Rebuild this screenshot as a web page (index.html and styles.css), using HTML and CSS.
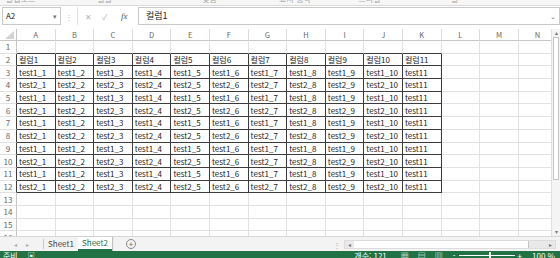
FILE: index.html
```html
<!DOCTYPE html>
<html lang="ko">
  <head>
    <meta charset="UTF-8" />
    <title>Excel - Sheet2</title>
    <link rel="stylesheet" href="styles.css">
  </head>
  <body>
    <div class="ribbon">
      <span class="grp g1">클립보드</span>
      <span class="grp g2">글꼴</span>
      <span class="grp g3">맞춤</span>
      <span class="grp g4">표시 형식</span>
      <span class="grp g5">스타일</span>
      <span class="grp g6">셀</span>
    </div>

    <div class="fbar">
      <div class="namebox">A2<span class="drop">▾</span></div>
      <span class="dots">⋮</span>
      <div class="fbtns">
        <span class="fb">✕</span>
        <span class="fb">✓</span>
        <span class="fx">fx</span>
      </div>
      <div class="formula">컬럼1<span class="drop">⌄</span></div>
    </div>

    <div class="work">
      <div class="sheet">
        <table class="grid">
          <tr class="hdr">
            <th class="corner"><span class="tri"></span></th>
            <th>A</th><th>B</th><th>C</th><th>D</th><th>E</th><th>F</th><th>G</th>
            <th>H</th><th>I</th><th>J</th><th>K</th><th>L</th><th>M</th><th>N</th>
          </tr>
          <tr class="r1">
            <th>1</th><td></td><td></td><td></td><td></td><td></td><td></td><td></td>
            <td></td><td></td><td></td><td></td><td></td><td></td><td></td>
          </tr>
          <tr class="d">
            <th>2</th><td>컬럼1</td><td>컬럼2</td><td>컬럼3</td><td>컬럼4</td><td>컬럼5</td><td>컬럼6</td>
            <td>컬럼7</td><td>컬럼8</td><td>컬럼9</td><td>컬럼10</td><td>컬럼11</td><td></td><td></td><td></td>
          </tr>
          <tr class="d">
            <th>3</th><td>test1_1</td><td>test1_2</td><td>test1_3</td><td>test1_4</td><td>test1_5</td><td>test1_6</td>
            <td>test1_7</td><td>test1_8</td><td>test1_9</td><td>test1_10</td><td>test11</td><td></td><td></td><td></td>
          </tr>
          <tr class="d">
            <th>4</th><td>test2_1</td><td>test2_2</td><td>test2_3</td><td>test2_4</td><td>test2_5</td><td>test2_6</td>
            <td>test2_7</td><td>test2_8</td><td>test2_9</td><td>test2_10</td><td>test11</td><td></td><td></td><td></td>
          </tr>
          <tr class="d">
            <th>5</th><td>test1_1</td><td>test1_2</td><td>test1_3</td><td>test1_4</td><td>test1_5</td><td>test1_6</td>
            <td>test1_7</td><td>test1_8</td><td>test1_9</td><td>test1_10</td><td>test11</td><td></td><td></td><td></td>
          </tr>
          <tr class="d">
            <th>6</th><td>test2_1</td><td>test2_2</td><td>test2_3</td><td>test2_4</td><td>test2_5</td><td>test2_6</td>
            <td>test2_7</td><td>test2_8</td><td>test2_9</td><td>test2_10</td><td>test11</td><td></td><td></td><td></td>
          </tr>
          <tr class="d">
            <th>7</th><td>test1_1</td><td>test1_2</td><td>test1_3</td><td>test1_4</td><td>test1_5</td><td>test1_6</td>
            <td>test1_7</td><td>test1_8</td><td>test1_9</td><td>test1_10</td><td>test11</td><td></td><td></td><td></td>
          </tr>
          <tr class="d">
            <th>8</th><td>test2_1</td><td>test2_2</td><td>test2_3</td><td>test2_4</td><td>test2_5</td><td>test2_6</td>
            <td>test2_7</td><td>test2_8</td><td>test2_9</td><td>test2_10</td><td>test11</td><td></td><td></td><td></td>
          </tr>
          <tr class="d">
            <th>9</th><td>test1_1</td><td>test1_2</td><td>test1_3</td><td>test1_4</td><td>test1_5</td><td>test1_6</td>
            <td>test1_7</td><td>test1_8</td><td>test1_9</td><td>test1_10</td><td>test11</td><td></td><td></td><td></td>
          </tr>
          <tr class="d">
            <th>10</th><td>test2_1</td><td>test2_2</td><td>test2_3</td><td>test2_4</td><td>test2_5</td><td>test2_6</td>
            <td>test2_7</td><td>test2_8</td><td>test2_9</td><td>test2_10</td><td>test11</td><td></td><td></td><td></td>
          </tr>
          <tr class="d">
            <th>11</th><td>test1_1</td><td>test1_2</td><td>test1_3</td><td>test1_4</td><td>test1_5</td><td>test1_6</td>
            <td>test1_7</td><td>test1_8</td><td>test1_9</td><td>test1_10</td><td>test11</td><td></td><td></td><td></td>
          </tr>
          <tr class="d">
            <th>12</th><td>test2_1</td><td>test2_2</td><td>test2_3</td><td>test2_4</td><td>test2_5</td><td>test2_6</td>
            <td>test2_7</td><td>test2_8</td><td>test2_9</td><td>test2_10</td><td>test11</td><td></td><td></td><td></td>
          </tr>
          <tr>
            <th>13</th><td></td><td></td><td></td><td></td><td></td><td></td><td></td>
            <td></td><td></td><td></td><td></td><td></td><td></td><td></td>
          </tr>
          <tr>
            <th>14</th><td></td><td></td><td></td><td></td><td></td><td></td><td></td>
            <td></td><td></td><td></td><td></td><td></td><td></td><td></td>
          </tr>
          <tr>
            <th>15</th><td></td><td></td><td></td><td></td><td></td><td></td><td></td>
            <td></td><td></td><td></td><td></td><td></td><td></td><td></td>
          </tr>
          <tr>
            <th>16</th><td></td><td></td><td></td><td></td><td></td><td></td><td></td>
            <td></td><td></td><td></td><td></td><td></td><td></td><td></td>
          </tr>
        </table>
      </div>
      <div class="vscroll">
        <span class="arr">▴</span>
        <div class="vthumb"></div>
        <span class="arr">▾</span>
      </div>
    </div>

    <div class="tabs">
      <span class="nav">◂</span>
      <span class="nav">▸</span>
      <span class="sep"></span>
      <span class="tab">Sheet1</span>
      <span class="tab active">Sheet2</span>
      <span class="add">+</span>
      <span class="hdots">⋮</span>
      <div class="hscroll">
        <span class="harr">◂</span>
        <div class="hthumb"></div>
        <span class="harr right">▸</span>
      </div>
    </div>

    <div class="status">
      <span class="ready">준비</span>
      <span class="macro">▣</span>
      <span class="count">개수: 121</span>
      <span class="views">
        <span class="view">▦</span>
        <span class="view">▤</span>
        <span class="view">▥</span>
      </span>
      <span class="zoom">
        <span>-</span>
        <span class="slider"><span class="knob"></span></span>
        <span>+</span>
      </span>
      <span class="pct">100 %</span>
    </div>
  </body>
</html>
```

FILE: styles.css
```css
html,
body {
  margin: 0;
  width: 560px;
  height: 258px;
  overflow: hidden;
}

body {
  font-family: "Noto Sans CJK KR", "Noto Sans", sans-serif;
  background: #fff;
  color: #222;
}

/* ribbon bottom, cut off */
.ribbon {
  height: 5px;
  overflow: hidden;
  border-bottom: 1px solid #dadada;
  background: #f6f6f6;
  display: flex;
}

.grp {
  font-size: 8px;
  line-height: 8px;
  margin-top: -5px;
  color: #a8a8a8;
}

.g1 { margin-left: 6px; }
.g2 { margin-left: 62px; }
.g3 { margin-left: 90px; }
.g4 { margin-left: 62px; }
.g5 { margin-left: 48px; }
.g6 { margin-left: 70px; }

/* formula bar */
.fbar {
  display: flex;
  align-items: center;
  height: 18px;
  margin-top: 1px;
  margin-bottom: 4px;
}

.namebox,
.formula {
  box-sizing: border-box;
  height: 18px;
  border: 1px solid #c8c8c8;
  background: #fff;
  font-size: 8px;
  line-height: 16px;
  display: flex;
  justify-content: space-between;
  padding: 0 3px;
}

.namebox {
  width: 59px;
  margin-left: 2px;
}

.drop {
  color: #777;
  font-size: 7px;
}

.dots {
  color: #c0c0c0;
  font-size: 8px;
  width: 16px;
  text-align: center;
}

.fbtns {
  display: flex;
  align-items: center;
  width: 60px;
  height: 18px;
  border-left: 1px solid #e2e2e2;
}

.fb {
  color: #b5b5b5;
  font-size: 8px;
  margin-left: 7px;
  width: 10px;
}

.fx {
  font-family: "Liberation Serif", serif;
  font-style: italic;
  font-size: 9px;
  color: #555;
  margin-left: 9px;
}

.formula {
  width: 422px;
  padding-left: 7px;
  font-size: 9px;
}

/* sheet */
.work {
  display: flex;
  height: 207px;
}

.sheet {
  width: 551px;
  height: 207px;
  overflow: hidden;
}

.grid {
  border-collapse: separate;
  border-spacing: 0;
  table-layout: fixed;
  width: 557.4px;
}

.grid th,
.grid td {
  box-sizing: border-box;
  padding: 0;
  border-right: 1px solid #e1e1e1;
  border-bottom: 1px solid #e1e1e1;
  font-size: 8px;
  font-weight: normal;
  white-space: nowrap;
  overflow: hidden;
}

.grid tr {
  height: 12.7px;
}

.grid tr.hdr {
  height: 11px;
}

.grid th {
  color: #666;
  text-align: center;
  background: #fff;
  width: 38.6px;
}

.grid th.corner,
.grid tr > th:first-child {
  width: 17px;
  border-right-color: #c6c6c6;
}

.grid .hdr th {
  border-bottom-color: #c6c6c6;
  border-right-color: #dcdcdc;
  font-size: 7.5px;
}

.corner {
  position: relative;
}

.tri {
  position: absolute;
  right: 2px;
  bottom: 1px;
  width: 0;
  height: 0;
  border-left: 9px solid transparent;
  border-bottom: 8px solid #d2d2d2;
}

.grid td {
  padding-left: 2px;
  color: #222;
}

/* data block A2:K12 */
.grid tr.r1 td:nth-child(-n + 12) {
  border-bottom-color: #3c3c3c;
}

.grid tr.d td:nth-child(-n + 12) {
  border-right-color: #3c3c3c;
  border-bottom-color: #3c3c3c;
}

.grid tr.d th {
  border-right-color: #3c3c3c;
}

.vscroll {
  width: 9px;
  box-sizing: border-box;
  border-left: 1px solid #e0e0e0;
  background: #f4f4f4;
  display: flex;
  flex-direction: column;
  align-items: center;
}

.arr {
  font-size: 6px;
  line-height: 8px;
  color: #777;
}

.vthumb {
  width: 6px;
  height: 143px;
  box-sizing: border-box;
  border: 1px solid #c4c4c4;
  background: #fff;
  margin-bottom: auto;
}

/* sheet tabs */
.tabs {
  display: flex;
  align-items: center;
  height: 15px;
  background: #f3f3f3;
  border-top: 1px solid #d8d8d8;
  box-sizing: border-box;
  font-size: 8px;
  color: #444;
}

.nav {
  font-size: 6px;
  color: #aaa;
  width: 12px;
  text-align: center;
}

.nav:first-child {
  margin-left: 9px;
}

.sep {
  width: 1px;
  height: 10px;
  background: #c8c8c8;
  margin-left: 10px;
}

.tab {
  width: 34px;
  text-align: center;
  line-height: 14px;
}

.tab.active {
  background: #fff;
  color: #217346;
  border-bottom: 2px solid #217346;
  box-shadow: 1px 0 1px rgba(0, 0, 0, 0.2);
  line-height: 12px;
  height: 14px;
  box-sizing: border-box;
}

.add {
  width: 8px;
  height: 8px;
  border: 1px solid #888;
  border-radius: 50%;
  font-size: 8px;
  line-height: 8px;
  text-align: center;
  color: #666;
  margin-left: 14px;
}

.hdots {
  margin-left: auto;
  color: #aaa;
  font-size: 8px;
}

.hscroll {
  display: flex;
  align-items: center;
  width: 212px;
  height: 9px;
  margin: 0 4px 0 3px;
  background: #e9e9e9;
  border: 1px solid #dcdcdc;
  box-sizing: border-box;
}

.harr {
  font-size: 6px;
  color: #777;
  width: 9px;
  text-align: center;
}

.harr.right {
  margin-left: auto;
}

.hthumb {
  width: 174px;
  height: 7px;
  background: #fff;
  border-right: 1px solid #c4c4c4;
}

/* status bar */
.status {
  display: flex;
  align-items: flex-start;
  height: 8px;
  overflow: hidden;
  background: #217346;
  color: #fff;
  font-size: 8px;
  line-height: 9px;
}

.ready {
  margin-left: 3px;
}

.macro {
  margin-left: 10px;
  font-size: 7px;
}

.count {
  margin-left: auto;
}

.views {
  display: flex;
  gap: 9px;
  margin-left: 14px;
  font-size: 8px;
}

.zoom {
  display: flex;
  align-items: flex-start;
  margin-left: 10px;
}

.slider {
  width: 56px;
  height: 1px;
  background: #fff;
  margin: 4px 3px 0;
  position: relative;
}

.knob {
  position: absolute;
  left: 30px;
  top: -3px;
  width: 2px;
  height: 7px;
  background: #fff;
}

.pct {
  margin: 0 5px 0 10px;
}
```
